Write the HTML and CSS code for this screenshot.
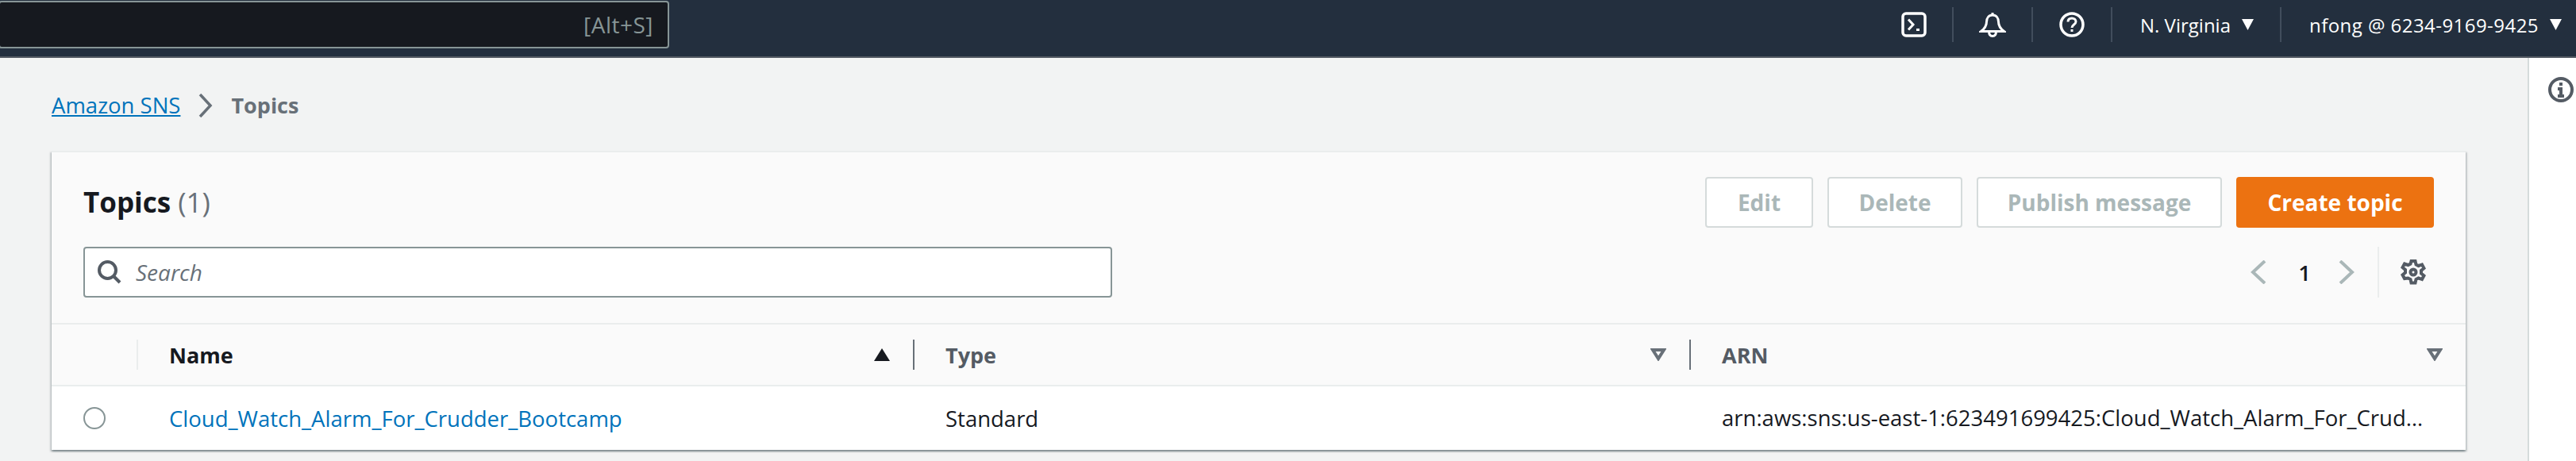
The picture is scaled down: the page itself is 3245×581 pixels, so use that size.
FILE: index.html
```html
<!DOCTYPE html>
<html lang="en">
<head>
    <meta charset="UTF-8">
    <title>Topics | Amazon SNS</title>
    <link rel="stylesheet" href="styles.css">
</head>
<body>
    <nav class="topnav">
        <div class="global-search"><span>[Alt+S]</span></div>
        <div class="nav-items">
            <div class="nav-icon nav-first">
                <svg width="32" height="32" viewBox="0 0 32 32" fill="none" stroke="#fff" stroke-width="3.5"><rect x="2" y="2" width="28" height="28" rx="4"/><path d="M9 9.500l6 6.500-6 6.500M19 22.500h4" stroke-width="3"/></svg>
            </div>
            <div class="nav-icon">
                <svg width="34" height="32" viewBox="0 0 34 32" fill="none" stroke="#fff" stroke-width="3"><path d="M17 1v3M17 4c-5 0-7.500 4-7.500 8.500 0 4.500-1.500 8-7 12h29c-5.500-4-7-7.500-7-12C24.500 8 22 4 17 4zM12.500 24.500c0 4 2 6 4.500 6s4.500-2 4.500-6"/></svg>
            </div>
            <div class="nav-icon">
                <svg width="32" height="32" viewBox="0 0 32 32" fill="none" stroke="#fff" stroke-width="3.500"><circle cx="16" cy="16" r="14"/><path d="M11 12.500c0-3 2.200-4.500 5-4.500s5 1.700 5 4.300c0 3.700-5 3.700-5 7.700" stroke-width="3"/><path d="M16 22v3" stroke-width="3"/></svg>
            </div>
            <div class="nav-menu nav-region">N. Virginia <svg class="caret" width="15" height="14" viewBox="0 0 15 14"><path d="M0 0h15l-7.500 14z" fill="#fff"/></svg></div>
            <div class="nav-menu nav-user"><span>nfong @ 6234-9169-9425</span> <svg class="caret" width="15" height="14" viewBox="0 0 15 14"><path d="M0 0h15l-7.500 14z" fill="#fff"/></svg></div>
        </div>
    </nav>

    <div class="page">
        <main class="content">
            <div class="breadcrumb">
                <a href="#">Amazon SNS</a>
                <svg width="18" height="30" viewBox="0 0 18 30" fill="none" stroke="#687078" stroke-width="3.500"><path d="M2 1l13 14L2 29"/></svg>
                <span>Topics</span>
            </div>

            <section class="card">
                <header class="card-head">
                    <div class="head-row">
                        <h1>Topics <span>(1)</span></h1>
                        <div class="actions">
                            <button class="btn btn-edit" disabled>Edit</button>
                            <button class="btn btn-delete" disabled>Delete</button>
                            <button class="btn btn-publish" disabled>Publish message</button>
                            <button class="btn btn-primary">Create topic</button>
                        </div>
                    </div>
                    <div class="head-row">
                        <div class="search">
                            <svg width="30" height="30" viewBox="0 0 30 30" fill="none" stroke="#545b64" stroke-width="4"><circle cx="12.500" cy="12.500" r="10.500"/><path d="M20 20l8 8"/></svg>
                            <span>Search</span>
                        </div>
                        <div class="pager">
                            <svg width="21" height="30" viewBox="0 0 21 30" fill="none" stroke="#aab7b8" stroke-width="4"><path d="M19 1L4 15l15 14"/></svg>
                            <span class="page-num">1</span>
                            <svg width="21" height="30" viewBox="0 0 21 30" fill="none" stroke="#aab7b8" stroke-width="4"><path d="M2 1l15 14L2 29"/></svg>
                            <div class="pager-settings">
                                <svg width="32" height="32" viewBox="0 0 32 32" fill="none" stroke="#545b64" stroke-width="4"><path d="M13.500 2h5l1 4.500 3 1.500 4.500-1.500 2.500 4.500-3.500 3v3.500l3.500 3-2.500 4.500-4.500-1.500-3 1.500-1 4.500h-5l-1-4.500-3-1.500L5 24l-2.500-4.500 3.500-3V13L2.500 10 5 5.500 9.500 7l3-1.500z"/><circle cx="16" cy="16" r="3.500"/></svg>
                            </div>
                        </div>
                    </div>
                </header>

                <div class="table">
                    <div class="th th-select"></div>
                    <div class="th th-name">Name
                        <svg width="20" height="16" viewBox="0 0 20 16"><path d="M10 0l10 16H0z" fill="#16191f"/></svg>
                    </div>
                    <div class="th">Type
                        <svg width="20" height="16" viewBox="0 0 20 16" fill="none" stroke="#687078" stroke-width="4"><path d="M3 2h14l-7 11z"/></svg>
                    </div>
                    <div class="th">ARN
                        <svg width="20" height="16" viewBox="0 0 20 16" fill="none" stroke="#687078" stroke-width="4"><path d="M3 2h14l-7 11z"/></svg>
                    </div>
                    <div class="td td-select"><span class="radio"></span></div>
                    <div class="td"><a href="#">Cloud_Watch_Alarm_For_Crudder_Bootcamp</a></div>
                    <div class="td">Standard</div>
                    <div class="td td-arn">arn:aws:sns:us-east-1:623491699425:Cloud_Watch_Alarm_For_Crudder_Bootcamp</div>
                </div>
            </section>
        </main>

        <aside class="side-panel">
            <svg width="32" height="32" viewBox="0 0 32 32" fill="none" stroke="#545b64" stroke-width="4"><circle cx="16" cy="16" r="14"/><path d="M16 7v4M12 15h4v9M12 24h8"/></svg>
        </aside>
    </div>
</body>
</html>
```

FILE: styles.css
```css
* {
    box-sizing: border-box;
}
body {
    margin: 0;
    height: 100vh;
    overflow: hidden;
    display: flex;
    flex-direction: column;
    font-family: "Open Sans", "Noto Sans", sans-serif;
    font-size: 27.5px;
    color: #16191f;
    background-color: #f2f3f3;
}
a {
    color: #0073bb;
    text-decoration: none;
}

/* top bar */
.topnav {
    flex: none;
    display: flex;
    justify-content: space-between;
    height: 73px;
    background-color: #232f3e;
    border-bottom: 2px solid #545b64;
}
.global-search {
    width: 845px;
    height: 60px;
    margin: 1px 0 0 -2px;
    padding-right: 18px;
    display: flex;
    align-items: center;
    justify-content: flex-end;
    background-color: #16191f;
    border: 2px solid #879596;
    border-radius: 4px;
    color: #879596;
    font-size: 28px;
    letter-spacing: 0.5px;
}
.nav-items {
    display: flex;
    align-items: flex-start;
    padding-top: 9px;
    color: #fff;
}
.nav-icon,
.nav-menu {
    height: 44px;
    display: flex;
    align-items: center;
    border-left: 2px solid #414d5c;
}
.nav-icon {
    width: 100px;
    justify-content: center;
}
.nav-first {
    width: 64px;
    border-left: none;
    justify-content: flex-start;
}
.nav-menu {
    font-size: 24px;
    gap: 14px;
    padding-left: 35px;
}
.nav-region {
    width: 213px;
}
.nav-user {
    width: 373px;
}
.nav-user span {
    letter-spacing: 0.45px;
}

/* page */
.page {
    flex: 1;
    display: flex;
    min-height: 0;
}
.content {
    flex: 1;
    padding: 0 78px 0 65px;
}
.side-panel {
    flex: none;
    width: 61px;
    padding: 24px 0 0 24px;
    background-color: #fff;
    border-left: 2px solid #d5dbdb;
}
.breadcrumb {
    height: 117px;
    display: flex;
    align-items: center;
    gap: 23px;
    padding-top: 2px;
}
.breadcrumb a {
    text-decoration: underline;
}
.breadcrumb span {
    font-size: 27px;
    font-weight: 700;
    color: #687078;
}

/* card */
.card {
    background-color: #fff;
    border-top: 2px solid #eaeded;
    box-shadow: 0 2px 2px 0 rgba(0, 28, 36, 0.3), 2px 2px 2px 0 rgba(0, 28, 36, 0.15), -2px 2px 2px 0 rgba(0, 28, 36, 0.15);
}
.card-head {
    display: flex;
    flex-direction: column;
    gap: 24px;
    padding: 31px 40px 32px;
    background-color: #fafafa;
    border-bottom: 2px solid #eaeded;
}
.head-row {
    display: flex;
    align-items: center;
    justify-content: space-between;
    height: 64px;
}
h1 {
    margin: 0 0 2px;
    font-size: 35px;
    font-weight: 700;
}
h1 span {
    font-weight: 400;
    color: #687078;
}
.actions {
    display: flex;
    gap: 18px;
}
.btn {
    height: 64px;
    padding: 0;
    font-family: inherit;
    font-size: 28px;
    font-weight: 700;
    color: #aab7b8;
    background-color: #fff;
    border: 2px solid #d5dbdb;
    border-radius: 4px;
}
.btn-edit {
    width: 136px;
}
.btn-delete {
    width: 170px;
}
.btn-publish {
    width: 309px;
}
.btn-primary {
    width: 249px;
    color: #fff;
    background-color: #ec7211;
    border-color: #ec7211;
}
.search {
    width: 1296px;
    height: 64px;
    display: flex;
    align-items: center;
    gap: 18px;
    padding-left: 16px;
    background-color: #fff;
    border: 2px solid #879596;
    border-radius: 4px;
    font-size: 28px;
    font-style: italic;
    color: #687078;
}
.pager {
    display: flex;
    align-items: center;
    margin-right: 10px;
}
.page-num {
    width: 91px;
    padding-left: 5px;
    text-align: center;
    font-weight: 600;
}
.pager-settings {
    height: 64px;
    display: flex;
    align-items: center;
    margin-left: 28px;
    padding-left: 27px;
    border-left: 2px solid #eaeded;
}

/* table */
.table {
    display: grid;
    grid-template-columns: 107px 978px 978px 1fr;
}
.th {
    height: 78px;
    display: flex;
    align-items: center;
    justify-content: space-between;
    padding: 0 29px 0 41px;
    font-size: 27px;
    font-weight: 700;
    color: #545b64;
    background-color: #fafafa;
    border-bottom: 2px solid #eaeded;
    position: relative;
}
.th::before {
    content: "";
    position: absolute;
    left: 0;
    top: 19px;
    height: 38px;
    border-left: 2px solid #687078;
}
.th-select::before {
    display: none;
}
.th-name {
    color: #16191f;
}
.th-name::before {
    border-left-color: #eaeded;
}
.td {
    height: 80px;
    display: flex;
    align-items: center;
    padding: 0 0 0 41px;
    min-width: 0;
}
.td-select {
    padding-left: 40px;
}
.td-arn {
    display: block;
    line-height: 80px;
    padding-right: 44px;
    overflow: hidden;
    white-space: nowrap;
    text-overflow: ellipsis;
}
.radio {
    width: 28px;
    height: 28px;
    border: 2px solid #879596;
    border-radius: 50%;
    background-color: #fff;
}
```
